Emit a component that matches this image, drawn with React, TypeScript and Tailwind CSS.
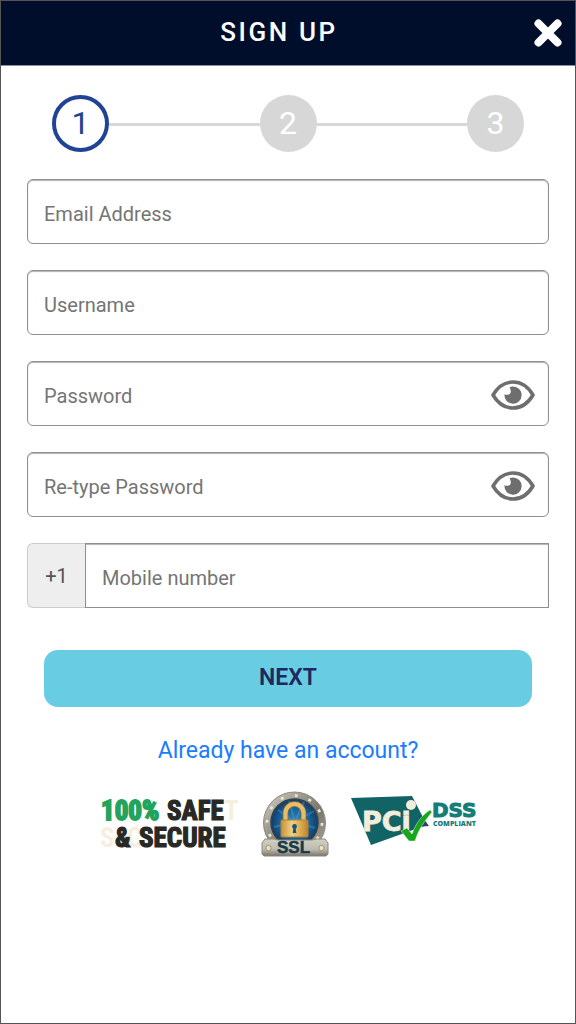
import React, { useState } from "react";

const fieldClass =
  "block h-[65px] w-full min-w-0 border border-[#8f8f8f] bg-white px-4 pt-1 text-[20px] text-[#333] shadow-[inset_0_1px_1px_rgba(0,0,0,0.3)] outline-none placeholder:text-[#757575] placeholder:opacity-100";

function EyeIcon() {
  return (
    <svg viewBox="0 0 44 30" className="h-[30px] w-11" aria-hidden="true">
      <path
        d="M2 15C7 6.500 14 2 22 2s15 4.500 20 13c-5 8.500-12 13-20 13S7 23.500 2 15Z"
        fill="#fff"
        stroke="#6e6e6e"
        strokeWidth="3.600"
        strokeLinejoin="round"
      />
      <path
        d="M22 6.500a8.600 8.600 0 1 1-8.500 7.700c2 1.300 6 .8 6.300-2.200.2-1.900-.6-3.300-1.200-4.800A8.500 8.500 0 0 1 22 6.500Z"
        fill="#6e6e6e"
      />
    </svg>
  );
}

function TextField({ id, label, type = "text" }: { id: string; label: string; type?: string }) {
  return <input id={id} type={type} aria-label={label} placeholder={label} className={`${fieldClass} rounded-md`} />;
}

function PasswordField({ id, label }: { id: string; label: string }) {
  const [visible, setVisible] = useState(false);
  return (
    <div className="relative">
      <input
        id={id}
        type={visible ? "text" : "password"}
        aria-label={label}
        placeholder={label}
        className={`${fieldClass} rounded-md`}
      />
      <button
        type="button"
        aria-label="Toggle visibility"
        onClick={() => setVisible(!visible)}
        className="absolute inset-y-0 right-[14px] flex items-center pt-[2px]"
      >
        <EyeIcon />
      </button>
    </div>
  );
}

function Stepper() {
  const circle =
    "flex size-[57px] shrink-0 items-center justify-center rounded-full text-[32px] font-normal leading-none";
  return (
    <ol className="flex items-center px-[51px] pt-[29px]">
      <li aria-current="step" className={`${circle} border-4 border-[#204396] pb-[2px] text-[#204396]`}>1</li>
      <li aria-hidden="true" className="mt-[2px] h-[3px] flex-1 bg-[#d8d8d8]" />
      <li className={`${circle} bg-[#d7d7d7] pb-[2px] text-white`}>2</li>
      <li aria-hidden="true" className="mt-[2px] h-[3px] flex-1 bg-[#d8d8d8]" />
      <li className={`${circle} bg-[#d7d7d7] pb-[2px] text-white`}>3</li>
    </ol>
  );
}

function SafeBadge() {
  return (
    <svg viewBox="0 0 142 64" className="h-16 w-[142px]" role="img" aria-label="100% Safe & Secure"
      fontFamily="'Roboto Condensed', Roboto, sans-serif" fontWeight="700" fontSize="27">
      <g fill="#f6efe0">
        <text x="125" y="29">T</text>
        <text x="1" y="56">S</text>
        <text x="28" y="56">C</text>
      </g>
      <text x="2" y="29" fill="#22a45c" stroke="#22a45c" strokeWidth="1.800">100%</text>
      <g fill="#282824" stroke="#282824" strokeWidth="1.200">
        <text x="68" y="29">SAFE</text>
        <text x="16" y="56">&amp;</text>
        <text x="40" y="56">SECURE</text>
      </g>
    </svg>
  );
}

function SslBadge() {
  return (
    <svg viewBox="0 0 70 68" className="h-[68px] w-[70px]" role="img" aria-label="SSL">
      <defs>
        <linearGradient id="metal" x1="0" y1="0" x2="1" y2="1">
          <stop offset="0" stopColor="#d8d4c8" />
          <stop offset="0.3" stopColor="#a3a095" />
          <stop offset="0.6" stopColor="#77756c" />
          <stop offset="1" stopColor="#b5b1a4" />
        </linearGradient>
        <linearGradient id="plate" x1="0" y1="0" x2="0" y2="1">
          <stop offset="0" stopColor="#d2cfc4" />
          <stop offset="0.6" stopColor="#bfbbaf" />
          <stop offset="1" stopColor="#77756c" />
        </linearGradient>
        <linearGradient id="gold" x1="0" y1="0" x2="1" y2="0">
          <stop offset="0" stopColor="#c98f38" />
          <stop offset="0.4" stopColor="#edd184" />
          <stop offset="0.7" stopColor="#dcae52" />
          <stop offset="1" stopColor="#bd8530" />
        </linearGradient>
        <radialGradient id="disc">
          <stop offset="0" stopColor="#2f86be" />
          <stop offset="0.65" stopColor="#17609a" />
          <stop offset="1" stopColor="#123c67" />
        </radialGradient>
      </defs>
      <circle cx="33.500" cy="32" r="31" fill="url(#metal)" stroke="#8d8a80" />
      <circle cx="33.500" cy="32" r="27.500" fill="none" stroke="#f0e8cf" strokeWidth="2.600" strokeDasharray="3 11.400" />
      <circle cx="33.500" cy="31.500" r="23.500" fill="url(#disc)" stroke="#344249" strokeWidth="1.500" />
      <path d="M34 31 28 10M34 31l9-20M34 31 17 19M34 31l19-11M34 31 13 36M34 31l20 6" stroke="#59acd7" strokeOpacity="0.35" strokeWidth="2" />
      <path d="M24.500 31V22a9 9 0 0 1 18 0v9" fill="none" stroke="#a37528" strokeWidth="5.500" />
      <path d="M24.500 31V22a9 9 0 0 1 18 0v9" fill="none" stroke="#e8bd66" strokeWidth="4" />
      <rect x="20" y="29" width="27" height="17" rx="1" fill="url(#gold)" stroke="#b5812d" />
      <circle cx="33.500" cy="35.500" r="2.400" fill="#175477" />
      <path d="M32.500 36h2l.8 6h-3.600z" fill="#175477" />
      <path d="M4 48h9l4 1h34l4-1h9l3 4v11l-2 2H3l-2-2V52z" fill="url(#plate)" stroke="#8b887b" />
      <circle cx="7.500" cy="57" r="2.700" fill="#eee2bb" stroke="#9a9480" />
      <circle cx="60.500" cy="57" r="2.700" fill="#eee2bb" stroke="#9a9480" />
      <text x="32.500" y="62" textAnchor="middle" fontFamily="'Liberation Sans', sans-serif" fontWeight="700" fontSize="17" fill="#173a49" stroke="#173a49" strokeWidth="0.500">SSL</text>
    </svg>
  );
}

function PciBadge() {
  return (
    <svg viewBox="0 0 127 52" className="h-[52px] w-[127px]" role="img" aria-label="PCI DSS Compliant" fontFamily="'DejaVu Sans', sans-serif" fontWeight="700">
      <path d="M0 3 61 1 76 30 20 50z" fill="#116365" />
      <path d="M70 20 78 31 66 32z" fill="#294571" />
      <text x="11" y="36" fontSize="27" fill="#f3eddd" stroke="#f3eddd" strokeWidth="0.800">PCi</text>
      <circle cx="60" cy="10" r="5" fill="#f3eddd" />
      <path d="M50 36 56 33 61 39C65 28 71 20 79 15l2 2C74 26 68 33 64 46h-6z" fill="#17a51c" stroke="#e5f4e4" strokeWidth="0.500" />
      <text x="81" y="22" fontSize="20" fill="#137d78" stroke="#137d78" strokeWidth="1">DSS</text>
      <text x="82" y="31" fontFamily="'Open Sans', sans-serif" fontWeight="800" fontSize="7" fill="#137d78">COMPLIANT</text>
    </svg>
  );
}

export default function App() {
  return (
    <div className="flex min-h-screen flex-col border border-[#555] bg-white font-['Roboto',sans-serif]">
      <header className="grid h-[65px] grid-cols-[54px_1fr_54px] items-center border-b border-[#8890a8] bg-[#000e2b] text-white">
        <h1 className="col-start-2 pr-[18px] pb-[2px] text-center text-[26px] font-medium leading-none tracking-widest">
          SIGN UP
        </h1>
        <button type="button" aria-label="Close" className="flex items-center justify-center">
          <svg viewBox="0 0 28 28" className="size-7" aria-hidden="true">
            <path d="M4.500 4.500 23.500 23.500M23.500 4.500 4.500 23.500" stroke="currentColor" strokeWidth="8" strokeLinecap="round" />
          </svg>
        </button>
      </header>
      <main>
        <Stepper />
        <form onSubmit={(e) => e.preventDefault()} className="flex flex-col gap-[26px] px-[26px] pt-[27px]">
          <TextField id="email" label="Email Address" type="email" />
          <TextField id="username" label="Username" />
          <PasswordField id="password" label="Password" />
          <PasswordField id="confirm" label="Re-type Password" />
          <div className="flex h-[65px]">
            <span className="flex w-[58px] shrink-0 items-center justify-center rounded-l-md border border-r-0 border-[#ccc] bg-[#eee] text-[20px] text-[#555]">
              +1
            </span>
            <input id="mobile" type="tel" aria-label="Mobile number" placeholder="Mobile number" className={fieldClass} />
          </div>
          <button
            type="submit"
            className="mx-[17px] mt-4 h-[57px] rounded-[14px] bg-[#68cce3] text-[23px] font-semibold text-[#20295f]"
          >
            NEXT
          </button>
        </form>
        <p className="pt-[29px] text-center text-[23px] leading-[30px]">
          <a href="#login" className="text-[#1a7cff]">Already have an account?</a>
        </p>
        <div className="flex items-start justify-center gap-5 pt-[25px]">
          <SafeBadge />
          <SslBadge />
          <div className="pt-1"><PciBadge /></div>
        </div>
      </main>
    </div>
  );
}
